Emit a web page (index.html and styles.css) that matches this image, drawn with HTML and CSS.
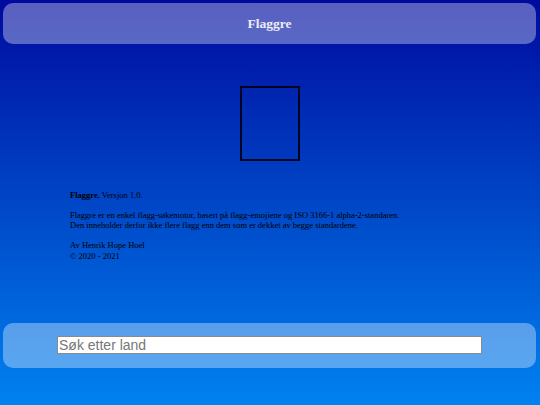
FILE: index.html
```html
<!DOCTYPE html>
<html lang="no">
<head>
<meta charset="utf-8">
<title>Flaggre</title>
<link rel="stylesheet" href="styles.css">
</head>
<body>
<div class="page">
  <header class="topbar"><h1 class="title">Flaggre</h1></header>
  <main class="main">
    <div class="flag-wrap"><div class="flag"></div></div>
    <section class="about">
      <p><b>Flaggre.</b> Versjon 1.0.</p>
      <p>Flaggre er en enkel flagg-søkemotor, basert på flagg-emojiene og ISO 3166-1 alpha-2-standaren.<br>Den inneholder derfor ikke flere flagg enn dem som er dekket av begge standardene.</p>
      <p>Av Henrik Hope Hoel<br>© 2020 - 2021</p>
    </section>
  </main>
  <footer class="searchbar"><input class="search" type="text" placeholder="Søk etter land"></footer>
</div>
</body>
</html>
```
FILE: styles.css
```css
html, body { margin: 0; padding: 0; }
body {
  background: linear-gradient(#000a9e, #0082f0);
  min-height: 405px;
  font-family: "Liberation Serif", "Times New Roman", serif;
}
.page {
  height: 405px;
  display: flex;
  flex-direction: column;
  padding: 3px 4px 0 3px;
  box-sizing: border-box;
}
.topbar {
  height: 41px;
  border-radius: 10px;
  background: rgba(255,255,255,0.35);
  display: flex;
  align-items: center;
  justify-content: center;
}
.title {
  margin: 0;
  font-size: 13.5px;
  font-weight: bold;
  color: #ececf6;
}
.main {
  flex: 1;
  display: flex;
  flex-direction: column;
}
.flag-wrap {
  display: flex;
  justify-content: center;
  padding-top: 42px;
  padding-left: 1px;
}
.flag {
  width: 56px;
  height: 71px;
  border: 2px solid #050520;
}
.about {
  padding: 29px 0 0 67px;
  font-size: 8.5px;
  line-height: 10.4px;
  color: #000;
}
.about p { margin: 0 0 9.6px 0; }
.searchbar {
  margin-bottom: 37px;
  height: 45px;
  border-radius: 10px;
  background: rgba(255,255,255,0.35);
  padding: 13px 0 0 54px;
  box-sizing: border-box;
}
.search {
  display: block;
  width: 425px;
  height: 18px;
  box-sizing: border-box;
  margin: 0;
  border: 1px solid #8a8a8a;
  padding: 0 1px;
  font-family: "Liberation Sans", Arial, sans-serif;
  font-size: 14px;
  background: #fff;
}
.search::placeholder { color: #777; }
```
